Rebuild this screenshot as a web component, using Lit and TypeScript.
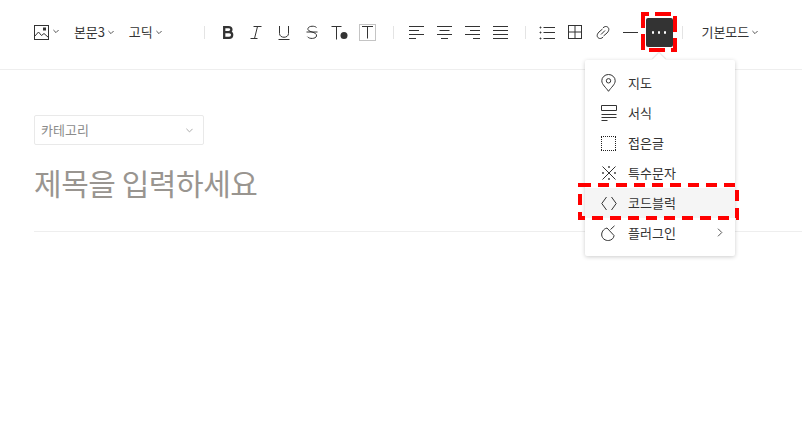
import { LitElement, html, css, svg } from "lit";
import { customElement } from "lit/decorators.js";

const chev = html`<svg class="chev" width="6" height="5" viewBox="0 0 6 5"><path d="M.4 1 3 3.600 5.600 1" fill="none" stroke="#555" stroke-width="1"/></svg>`;
const ic = (w: number, h: number, body: unknown) =>
  html`<svg width=${w} height=${h} viewBox="0 0 ${w} ${h}" fill="none" stroke="#333" stroke-width="1">${body}</svg>`;

const tools: unknown[] = [
  ic(12, 15, svg`<path d="M2.200 2.100h4.300c1.900 0 2.900.9 2.900 2.500 0 1.500-1 2.500-2.900 2.500H2.200zM2.200 7.100h4.900c2.100 0 3.100 1 3.100 2.700 0 1.800-1.100 3.100-3.100 3.100H2.200z" stroke-width="2.300"/>`),
  ic(12, 15, svg`<path d="M3.500 1.500h8M.5 13.500h7M7.500 1.500 4.500 13.500"/>`),
  ic(12, 15, svg`<path d="M1.500 1v7.500c0 5 9 5 9 0V1M.5 14.500h11"/>`),
  ic(12, 15, svg`<path d="M10.500 2.500C9 .8 3 .6 2 3.300c-.6 1.800 1 2.800 4 3.700 3 .9 4.800 1.900 4.500 4-.5 3-7.500 3.200-9 .7M.5 7h11"/>`),
  ic(17, 15, svg`<path d="M.5 1.500h10M5.500 1.500v13"/><circle cx="13" cy="10.500" r="3.500" fill="#333" stroke="none"/>`),
  ic(17, 17, svg`<rect x=".5" y=".5" width="16" height="16" stroke="#c4c4c4"/><path d="M3 2.500h11M8.500 2.500v12"/>`),
];
const aligns = [
  svg`<path d="M0 1.500h15M0 5.500h10M0 9.500h15M0 13.500h7"/>`,
  svg`<path d="M0 1.500h15M2.500 5.500h10M0 9.500h15M4 13.500h7"/>`,
  svg`<path d="M0 1.500h15M5 5.500h10M0 9.500h15M8 13.500h7"/>`,
  svg`<path d="M0 1.500h15M0 5.500h15M0 9.500h15M0 13.500h15"/>`,
];
const list = svg`<path d="M4.500 2.500H16M4.500 7.500H16M4.500 13.500H16"/><path d="M1.500 1.500v2M.5 2.500h2M1.500 6.500v2M.5 7.500h2M1.500 12.500v2M.5 13.500h2" stroke-width=".8"/>`;
const table = svg`<rect x=".5" y=".5" width="13" height="13"/><path d="M7 .5v13M.5 7h13"/>`;
const link = svg`<path d="M6.500 3 3 6C.5 8.500.8 11 2.500 12c1.500 1 3 .5 4.500-.8M7.500 10 11 7c2.500-2.500 2.200-5 .5-6C10 0 8.500.5 7 1.800M5 8.500 9 4.500"/>`;

const menu: [string, unknown, boolean?][] = [
  ["지도", ic(15, 18, svg`<path d="M7.500 17.300C5 13.500 .8 10.500 .8 6.800a6.700 6.300 0 0 1 13.400 0c0 3.700-4.200 6.700-6.700 10.500z"/><circle cx="7.500" cy="6.800" r="2.200"/>`)],
  ["서식", ic(16, 16, svg`<path d="M.5 .5h15v5H.5zM.5 9.500h15M.5 12.500h15M.5 15.500h6"/>`)],
  ["접은글", ic(15, 15, svg`<path d="M0 .5h15M0 14.500h15M.5 1v14M14.500 1v14" stroke="#222" stroke-dasharray="1 1"/>`)],
  ["특수문자", ic(16, 16, svg`<path d="M1.500 1.500l13 13M14.500 1.500l-13 13"/><g fill="#333" stroke="none"><circle cx="8" cy="2" r=".9"/><circle cx="8" cy="14" r=".9"/><circle cx="2" cy="8" r=".9"/><circle cx="14" cy="8" r=".9"/></g>`)],
  ["코드블럭", ic(16, 15, svg`<path d="M5.500 1 .8 7.500l4.700 6.500M10.500 1l4.700 6.500-4.700 6.500"/>`)],
  ["플러그인", ic(17, 17, svg`<path d="M6 3C2 4 .5 7.500.7 10c.3 3.500 3.500 5.800 7 5.500 3-.3 5.300-2.500 5.300-5L6 3z"/><path d="M9.500 4.500 13.500 .8"/>`), true],
];

@customElement("app-root")
export class AppRoot extends LitElement {
  static styles = css`
    :host { display: block; position: relative; width: 802px; height: 438px; background: #fff; overflow: hidden;
      font-family: "Noto Sans CJK KR", "Noto Sans", sans-serif; color: #333; }
    svg { display: block; flex: none; }
    .toolbar { height: 63px; border-bottom: 1px solid #eee; display: flex; align-items: center; padding: 1px 0 5px 34px; }
    .img { display: flex; align-items: center; gap: 4px; }
    .img .chev { margin-top: -2px; }
    .drop { display: flex; align-items: center; font-size: 13px; line-height: 20px; letter-spacing: -.1px; white-space: nowrap; margin-top: -1px; }
    .drop .chev { margin-left: 3px; }
    .d2, .d3 { margin-left: 15px; }
    .d4 { margin-left: 19px; }
    .sep { width: 1px; height: 13px; background: #e4e4e4; flex: none; }
    .s1 { margin: 0 9px 0 42px; }
    .s2 { margin: 0 9px 0 11px; }
    .s3 { margin: 0 7px 0 10px; }
    .s4 { margin: 0 0 0 9px; }
    .slot { width: 28px; height: 28px; display: flex; align-items: center; justify-content: center; flex: none; }
    .hr { width: 15px; height: 1px; background: #333; }
    .more { background: #333; border-radius: 2px; height: 29px; width: 27px; margin-left: 1px; gap: 3.600px; }
    .more i { width: 2.400px; height: 2.400px; border-radius: 50%; background: #fff; }
    .content { padding: 45px 0 0 34px; }
    .cat { width: 170px; height: 30px; box-sizing: border-box; border: 1px solid #e9e9e9; border-radius: 2px; display: flex; align-items: center; justify-content: space-between; padding: 0 10px 0 6px; font-size: 13px; color: #8b8b8b; }
    .cat span { margin-top: -2px; }
    .title { font-size: 30px; line-height: 44px; color: #999590; margin-top: 15px; letter-spacing: -.45px; white-space: nowrap; }
    .rule { height: 1px; background: #eee; margin-top: 27px; }
    .menu { position: absolute; left: 585px; top: 60px; width: 150px; padding: 8px 0; background: #fff; border-radius: 2px; box-shadow: 0 1px 4px rgba(0,0,0,.2); }
    .arrow { position: absolute; left: 654px; top: 55px; width: 10px; height: 10px; background: #fff; transform: rotate(45deg); box-shadow: -1px -1px 1px rgba(0,0,0,.1); }
    .row { height: 30px; display: flex; align-items: center; font-size: 13px; position: relative; }
    .row.on { background: #f5f5f5; }
    .ico { width: 27px; margin-left: 16px; display: flex; }
    .txt { margin-top: -2px; }
    .sub { position: absolute; right: 12px; top: 10px; }
    .marks { position: absolute; left: 0; top: 0; pointer-events: none; }
  `;

  render() {
    return html`
      <div class="toolbar">
        <div class="img">
          ${ic(15, 15, svg`<rect x=".5" y=".5" width="14" height="14"/><path d="M.5 11.500 4.500 7l3 3.500 2.500-2 4.500 4"/><rect x="9.500" y="3" width="2" height="2"/>`)}
          ${chev}
        </div>
        <div class="drop d2">본문3${chev}</div>
        <div class="drop d3">고딕${chev}</div>
        <div class="sep s1"></div>
        ${tools.map((i) => html`<div class="slot">${i}</div>`)}
        <div class="sep s2"></div>
        ${aligns.map((a) => html`<div class="slot">${ic(15, 15, a)}</div>`)}
        <div class="sep s3"></div>
        <div class="slot">${ic(16, 15, list)}</div>
        <div class="slot">${ic(14, 15, table)}</div>
        <div class="slot">${ic(14, 13, link)}</div>
        <div class="slot"><div class="hr"></div></div>
        <div class="slot more"><i></i><i></i><i></i></div>
        <div class="sep s4"></div>
        <div class="drop d4">기본모드${chev}</div>
      </div>
      <div class="content">
        <div class="cat"><span>카테고리</span>
          <svg width="7" height="5" viewBox="0 0 7 5"><path d="M.4 .8 3.500 3.900 6.600 .8" fill="none" stroke="#aaa"/></svg>
        </div>
        <div class="title">제목을 입력하세요</div>
        <div class="rule"></div>
      </div>
      <div class="menu">
        ${menu.map(([t, i, sub]) => html`<div class="row ${t === "코드블럭" ? "on" : ""}">
          <span class="ico">${i}</span><span class="txt">${t}</span>
          ${sub ? html`<svg class="sub" width="6" height="9" viewBox="0 0 6 9"><path d="M1 .7 4.800 4.500 1 8.300" fill="none" stroke="#555"/></svg>` : ""}
        </div>`)}
      </div>
      <div class="arrow"></div>
      <svg class="marks" width="802" height="438" fill="none" stroke="#f00" stroke-width="4">
        <rect x="643" y="14" width="32" height="36" stroke-dasharray="16 6" stroke-dashoffset="10"/>
        <rect x="580" y="185" width="157" height="33" stroke-dasharray="11 7"/>
      </svg>
    `;
  }
}
